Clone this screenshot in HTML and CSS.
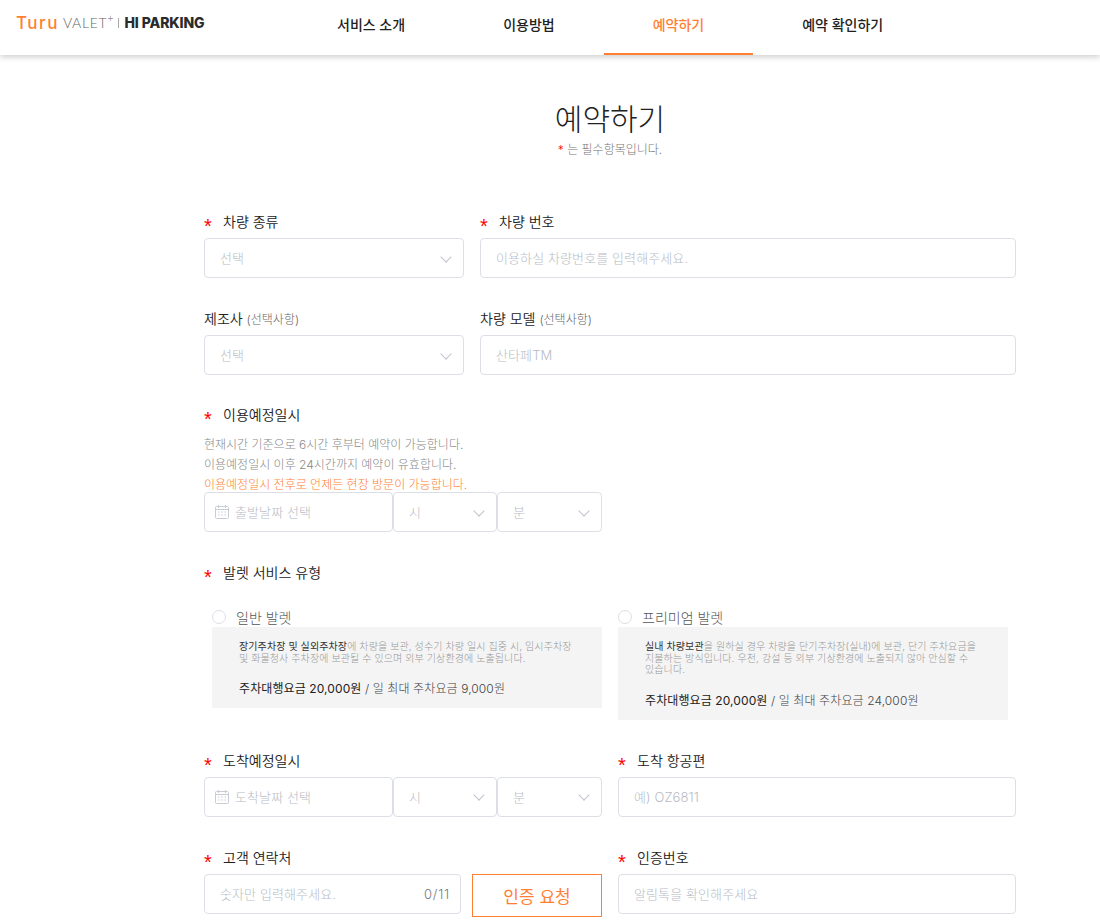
FILE: index.html
```html
<!DOCTYPE html>
<html lang="ko">
<head>
  <meta charset="UTF-8" />
  <title>예약하기</title>
  <link rel="stylesheet" href="styles.css">
</head>
<body>
  <header class="top-bar">
    <a class="logo" href="#">
      <span class="logo-turu">Turu</span>
      <span class="logo-valet">VALET<sup>+</sup></span>
      <span class="logo-line"></span>
      <span class="logo-hi">HI PARKING</span>
    </a>
    <nav class="menu">
      <a href="#">서비스 소개</a>
      <a href="#">이용방법</a>
      <a href="#" class="active">예약하기</a>
      <a href="#">예약 확인하기</a>
    </nav>
  </header>

  <main class="content">
    <h1>예약하기</h1>
    <p class="required-note"><span class="star">*</span> 는 필수항목입니다.</p>

    <form class="resv-form">
      <div class="row first">
        <div class="field car-type">
          <label class="req">차량 종류</label>
          <div class="select">선택</div>
        </div>
        <div class="field grow">
          <label class="req">차량 번호</label>
          <input type="text" placeholder="이용하실 차량번호를 입력해주세요." />
        </div>
      </div>

      <div class="row">
        <div class="field car-type">
          <label>제조사 <small>(선택사항)</small></label>
          <div class="select">선택</div>
        </div>
        <div class="field grow">
          <label>차량 모델 <small>(선택사항)</small></label>
          <input type="text" placeholder="산타페TM" />
        </div>
      </div>

      <div class="row depart">
        <div class="field half">
          <label class="req">이용예정일시</label>
          <ul class="help">
            <li>현재시간 기준으로 6시간 후부터 예약이 가능합니다.</li>
            <li>이용예정일시 이후 24시간까지 예약이 유효합니다.</li>
            <li class="orange">이용예정일시 전후로 언제든 현장 방문이 가능합니다.</li>
          </ul>
          <div class="date-group">
            <div class="date-input">
              <svg class="cal" width="14" height="14" viewBox="0 0 14 14" fill="none" stroke="#c8ccd4"><rect x="0.5" y="1.5" width="13" height="12" rx="1"/><path d="M0.5 4.5h13M3.5 0v3M10.5 0v3M3 7h1.5M6.2 7h1.5M9.5 7h1.5M3 10h1.5M6.2 10h1.5M9.5 10h1.5"/></svg>
              출발날짜 선택
            </div>
            <div class="select hour">시</div>
            <div class="select min">분</div>
          </div>
        </div>
      </div>

      <div class="row">
        <div class="field grow">
          <label class="req">발렛 서비스 유형</label>
          <div class="valet-types">
            <div class="valet-type">
              <div class="radio"><i></i>일반 발렛</div>
              <div class="valet-box">
                <p><b>장기주차장 및 실외주차장</b>에 차량을 보관, 성수기 차량 일시 집중 시, 임시주차장<br>및 화물청사 주차장에 보관될 수 있으며 외부 기상환경에 노출됩니다.</p>
                <div class="fee"><b>주차대행요금 20,000원</b> / 일 최대 주차요금 9,000원</div>
              </div>
            </div>
            <div class="valet-type">
              <div class="radio"><i></i>프리미엄 발렛</div>
              <div class="valet-box">
                <p><b>실내 차량보관</b>을 원하실 경우 차량을 단기주차장(실내)에 보관, 단기 주차요금을<br>지불하는 방식입니다. 우천, 강설 등 외부 기상환경에 노출되지 않아 안심할 수<br>있습니다.</p>
                <div class="fee"><b>주차대행요금 20,000원</b> / 일 최대 주차요금 24,000원</div>
              </div>
            </div>
          </div>
        </div>
      </div>

      <div class="row">
        <div class="field half">
          <label class="req">도착예정일시</label>
          <div class="date-group">
            <div class="date-input">
              <svg class="cal" width="14" height="14" viewBox="0 0 14 14" fill="none" stroke="#c8ccd4"><rect x="0.5" y="1.5" width="13" height="12" rx="1"/><path d="M0.5 4.5h13M3.5 0v3M10.5 0v3M3 7h1.5M6.2 7h1.5M9.5 7h1.5M3 10h1.5M6.2 10h1.5M9.5 10h1.5"/></svg>
              도착날짜 선택
            </div>
            <div class="select hour">시</div>
            <div class="select min">분</div>
          </div>
        </div>
        <div class="field half">
          <label class="req">도착 항공편</label>
          <input type="text" placeholder="예) OZ6811" />
        </div>
      </div>

      <div class="row last">
        <div class="field half">
          <label class="req">고객 연락처</label>
          <div class="phone-group">
            <div class="phone-input">
              <input type="text" placeholder="숫자만 입력해주세요." />
              <span class="count">0/11</span>
            </div>
            <button type="button" class="auth-btn">인증 요청</button>
          </div>
        </div>
        <div class="field half">
          <label class="req">인증번호</label>
          <input type="text" placeholder="알림톡을 확인해주세요" />
        </div>
      </div>
    </form>
  </main>
</body>
</html>
```

FILE: styles.css
```css
:root {
  --orange: #ff7f32;
  --border: #dcdfe6;
  --holder: #b8bcc4;
  --text: #222;
}
* {
  box-sizing: border-box;
}
body {
  margin: 0;
  font-family: 'Inter', 'Noto Sans CJK KR', sans-serif;
  color: var(--text);
  background: #fff;
}
a {
  text-decoration: none;
  color: inherit;
}

/* header */
.top-bar {
  display: flex;
  height: 55px;
  background: #fff;
  box-shadow: 0 2px 6px rgba(0, 0, 0, 0.2);
}
.logo {
  display: flex;
  align-items: center;
  width: 288px;
  padding: 0 0 10px 16px;
  white-space: nowrap;
}
.logo-turu {
  font-size: 17px;
  font-weight: 500;
  color: var(--orange);
  letter-spacing: 1.5px;
}
.logo-valet {
  margin-left: 4px;
  font-family: 'Lato', sans-serif;
  font-size: 14px;
  font-weight: 300;
  color: #666;
  letter-spacing: 0.7px;
}
.logo-valet sup {
  font-size: 11px;
  line-height: 0;
}
.logo-line {
  width: 1px;
  height: 10px;
  margin: 0 5px 0 4px;
  background: #aaa;
}
.logo-hi {
  font-size: 14px;
  font-weight: 800;
  letter-spacing: -0.1px;
  color: #2b2b2b;
}
.menu {
  display: flex;
}
.menu a {
  padding: 0 49px 6px;
  display: flex;
  align-items: center;
  font-size: 14px;
  font-weight: 500;
  border-bottom: 2px solid transparent;
}
.menu a.active {
  color: var(--orange);
  border-bottom-color: var(--orange);
}

/* page */
.content {
  width: 812px;
  margin-left: 204px;
}
h1 {
  margin: 43px 0 0;
  font-size: 30px;
  font-weight: 300;
  line-height: 42px;
  text-align: center;
}
.required-note {
  margin: 0;
  font-size: 12px;
  font-weight: 300;
  line-height: 20px;
  color: #777;
  text-align: center;
}
.star {
  color: #f00;
}
.row {
  display: flex;
  gap: 16px;
  margin-top: 28px;
}
.row.first {
  margin-top: 49px;
}
.row.depart {
  margin-top: 27px;
}
.field label {
  display: block;
  height: 24px;
  margin-bottom: 5px;
  font-size: 14px;
  font-weight: 350;
  line-height: 26px;
}
.field label.req::before {
  content: "*";
  display: inline-block;
  width: 19px;
  color: #f00;
  font-family: 'Liberation Sans', sans-serif;
  font-size: 20px;
  line-height: 1;
  vertical-align: -6px;
}
.field small {
  font-size: 12px;
  font-weight: 300;
  color: #666;
}
.car-type {
  width: 260px;
}
.grow {
  flex: 1;
}
.half {
  width: 398px;
}
input,
.select,
.date-input {
  display: block;
  width: 100%;
  height: 40px;
  padding: 0 15px;
  border: 1px solid var(--border);
  border-radius: 4px;
  background: #fff;
  font-family: inherit;
  font-size: 13px;
  font-weight: 300;
  letter-spacing: 0.1px;
  line-height: 38px;
  color: var(--holder);
}
input::placeholder {
  color: var(--holder);
}
.select {
  position: relative;
}
.select::after {
  content: "";
  position: absolute;
  top: 13.5px;
  right: 13.5px;
  width: 7px;
  height: 7px;
  border-right: 1px solid #c0c4cc;
  border-bottom: 1px solid #c0c4cc;
  transform: rotate(45deg);
}

/* date inputs */
.help {
  margin: 9px 0 -3px;
  padding: 0;
  list-style: none;
  font-size: 12px;
  font-weight: 300;
  line-height: 20px;
  color: #888;
  white-space: nowrap;
}
.help .orange {
  color: var(--orange);
}
.date-group {
  display: flex;
}
.date-input {
  display: flex;
  align-items: center;
  gap: 6px;
  width: 189px;
  padding: 0 10px;
}
.hour {
  width: 104px;
}
.min {
  width: 105px;
}

/* valet */
.valet-types {
  display: flex;
  align-items: flex-start;
  gap: 16px;
  margin-top: 21px;
  padding: 0 8px;
}
.valet-type {
  width: 390px;
}
.radio {
  display: flex;
  align-items: center;
  gap: 10px;
  height: 22px;
  padding-top: 2px;
  font-size: 14px;
  font-weight: 300;
  color: #555;
}
.radio i {
  width: 14px;
  height: 14px;
  border: 1px solid var(--border);
  border-radius: 50%;
}
.valet-box {
  padding: 14px 28px 9px 27px;
  background: #f4f4f4;
}
.valet-box p {
  margin: 0;
  font-size: 10px;
  font-weight: 300;
  letter-spacing: 0.1px;
  line-height: 11.5px;
  color: #999;
  white-space: nowrap;
}
.valet-box p b {
  font-weight: 400;
  color: #333;
}
.fee {
  margin-top: 14px;
  font-size: 12px;
  font-weight: 300;
  letter-spacing: 0.1px;
  line-height: 21px;
  color: #444;
}
.fee b {
  font-weight: 400;
  color: #222;
}

/* phone */
.phone-group {
  display: flex;
  gap: 11px;
}
.phone-input {
  position: relative;
  width: 257px;
}
.phone-input input {
  padding-right: 50px;
}
.count {
  position: absolute;
  top: 11px;
  right: 11px;
  font-size: 13px;
  font-weight: 300;
  letter-spacing: 0.8px;
  line-height: 18px;
  color: #777;
}
.auth-btn {
  width: 130px;
  height: 43px;
  border: 1px solid var(--orange);
  background: #fff;
  font-family: inherit;
  font-size: 17px;
  color: var(--orange);
}
```
